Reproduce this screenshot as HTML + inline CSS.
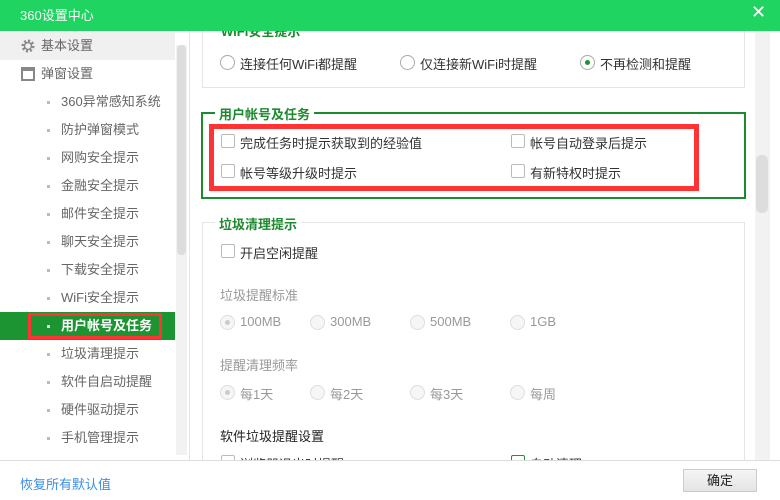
<!DOCTYPE html>
<html><head><meta charset="utf-8"><style>
*{margin:0;padding:0;box-sizing:border-box}
body{width:780px;height:500px;overflow:hidden;background:#fff;font-family:"Liberation Sans","Noto Sans CJK SC",sans-serif;font-size:13px;color:#333;position:relative}
.a{position:absolute;white-space:nowrap}
.title{left:0;top:0;width:780px;height:31px;background:#1fd460;color:#fff;z-index:5}
.side{left:0;top:31px;width:175px;height:429px;background:#fff}
.si{left:0;width:175px;height:28px;line-height:28px;color:#666}
.dot{position:absolute;left:47px;top:13px;width:3px;height:3px;background:#bbb}
.cb{position:absolute;width:14px;height:14px;border:1px solid #bbb;background:#fff;border-radius:2px}
.rd{position:absolute;width:15px;height:15px;border:1px solid #aaa;border-radius:50%;background:#fff}
.rdd{border-color:#ddd;background:#f6f6f6}
.g{color:#999}
</style></head><body>
<div class="a title"><span class="a" style="left:20px;top:5px;font-size:13px">360设置中心</span><span class="a" style="left:751px;top:2px;font-size:18px">✕</span></div>
<div class="a side">
 <div class="a si" style="top:1px;background:#f0f0f0;height:28px"><svg class="a" style="left:21px;top:7px" width="14" height="14" viewBox="0 0 14 14"><circle cx="7" cy="7" r="5" fill="none" stroke="#888" stroke-width="3" stroke-dasharray="2 1.9"/><circle cx="7" cy="7" r="3.5" fill="none" stroke="#888" stroke-width="1.5"/></svg><span class="a" style="left:41px;color:#666">基本设置</span></div>
 <div class="a si" style="top:29px"><svg class="a" style="left:21px;top:7px" width="14" height="14"><rect x="1" y="1" width="12" height="12" fill="none" stroke="#888" stroke-width="2"/><rect x="1" y="1" width="12" height="3" fill="#888"/></svg><span class="a" style="left:41px">弹窗设置</span></div>
</div>
<div class="a si" style="top:88px"><i class="dot"></i><span class="a" style="left:61px">360异常感知系统</span></div>
<div class="a si" style="top:116px"><i class="dot"></i><span class="a" style="left:61px">防护弹窗模式</span></div>
<div class="a si" style="top:144px"><i class="dot"></i><span class="a" style="left:61px">网购安全提示</span></div>
<div class="a si" style="top:172px"><i class="dot"></i><span class="a" style="left:61px">金融安全提示</span></div>
<div class="a si" style="top:200px"><i class="dot"></i><span class="a" style="left:61px">邮件安全提示</span></div>
<div class="a si" style="top:228px"><i class="dot"></i><span class="a" style="left:61px">聊天安全提示</span></div>
<div class="a si" style="top:256px"><i class="dot"></i><span class="a" style="left:61px">下载安全提示</span></div>
<div class="a si" style="top:284px"><i class="dot"></i><span class="a" style="left:61px">WiFi安全提示</span></div>
<div class="a si" style="top:312px;background:#1c9431;color:#fff;font-weight:bold"><div class="a" style="left:28px;top:1px;width:134px;height:26px;border:3px solid #f33"></div><i class="dot" style="background:#ddd"></i><span class="a" style="left:61px">用户帐号及任务</span></div>
<div class="a si" style="top:340px"><i class="dot"></i><span class="a" style="left:61px">垃圾清理提示</span></div>
<div class="a si" style="top:368px"><i class="dot"></i><span class="a" style="left:61px">软件自启动提醒</span></div>
<div class="a si" style="top:396px"><i class="dot"></i><span class="a" style="left:61px">硬件驱动提示</span></div>
<div class="a si" style="top:424px"><i class="dot"></i><span class="a" style="left:61px">手机管理提示</span></div>
<div class="a" style="left:176px;top:45px;width:11px;height:410px;background:#f2f2f2"></div>
<div class="a" style="left:177px;top:45px;width:9px;height:210px;background:#ddd;border-radius:4px"></div>
<div class="a" style="left:189px;top:31px;width:1px;height:429px;background:#e5e5e5"></div>
<div class="a" style="left:755px;top:31px;width:15px;height:429px;background:#f2f2f2"></div>
<div class="a" style="left:756px;top:155px;width:12px;height:58px;background:#ddd;border-radius:5px"></div>
<!-- wifi box -->
<div class="a" style="left:202px;top:20px;width:543px;height:68px;border:1px solid #e5e5e5"></div>
<span class="a" style="left:217px;top:21px;color:#1c8a2e;font-weight:bold;background:#fff;padding:0 4px">WiFi安全提示</span>
<i class="rd" style="left:220px;top:55px"></i><span class="a" style="left:240px;top:54px">连接任何WiFi都提醒</span>
<i class="rd" style="left:400px;top:55px"></i><span class="a" style="left:420px;top:54px">仅连接新WiFi时提醒</span>
<i class="rd" style="left:580px;top:55px"></i><i class="a" style="left:585px;top:60px;width:5px;height:5px;border-radius:50%;background:#1c9431"></i><span class="a" style="left:600px;top:54px">不再检测和提醒</span>
<!-- account box -->
<div class="a" style="left:201px;top:112px;width:545px;height:87px;border:2px solid #1c8a2e"></div>
<span class="a" style="left:215px;top:104px;color:#1c8a2e;font-weight:bold;background:#fff;padding:0 4px">用户帐号及任务</span>
<div class="a" style="left:209px;top:124px;width:490px;height:67px;border:5px solid #f33"></div>
<i class="cb" style="left:221px;top:134px"></i><span class="a" style="left:240px;top:133px">完成任务时提示获取到的经验值</span>
<i class="cb" style="left:511px;top:134px"></i><span class="a" style="left:530px;top:133px">帐号自动登录后提示</span>
<i class="cb" style="left:221px;top:164px"></i><span class="a" style="left:240px;top:163px">帐号等级升级时提示</span>
<i class="cb" style="left:511px;top:164px"></i><span class="a" style="left:530px;top:163px">有新特权时提示</span>
<!-- junk box -->
<div class="a" style="left:202px;top:222px;width:543px;height:260px;border:1px solid #e5e5e5"></div>
<span class="a" style="left:215px;top:214px;color:#1c8a2e;font-weight:bold;background:#fff;padding:0 4px">垃圾清理提示</span>
<i class="cb" style="left:221px;top:244px"></i><span class="a" style="left:240px;top:243px">开启空闲提醒</span>
<span class="a g" style="left:220px;top:285px">垃圾提醒标准</span>
<i class="rd rdd" style="left:220px;top:315px"></i><i class="a" style="left:225px;top:320px;width:5px;height:5px;border-radius:50%;background:#ccc"></i><span class="a g" style="left:240px;top:314px">100MB</span>
<i class="rd rdd" style="left:310px;top:315px"></i><span class="a g" style="left:330px;top:314px">300MB</span>
<i class="rd rdd" style="left:410px;top:315px"></i><span class="a g" style="left:430px;top:314px">500MB</span>
<i class="rd rdd" style="left:510px;top:315px"></i><span class="a g" style="left:530px;top:314px">1GB</span>
<span class="a g" style="left:220px;top:355px">提醒清理频率</span>
<i class="rd rdd" style="left:220px;top:385px"></i><i class="a" style="left:225px;top:390px;width:5px;height:5px;border-radius:50%;background:#ccc"></i><span class="a g" style="left:240px;top:384px">每1天</span>
<i class="rd rdd" style="left:310px;top:385px"></i><span class="a g" style="left:330px;top:384px">每2天</span>
<i class="rd rdd" style="left:410px;top:385px"></i><span class="a g" style="left:430px;top:384px">每3天</span>
<i class="rd rdd" style="left:510px;top:385px"></i><span class="a g" style="left:530px;top:384px">每周</span>
<span class="a" style="left:220px;top:426px;color:#222">软件垃圾提醒设置</span>
<i class="cb" style="left:221px;top:455px"></i><span class="a" style="left:240px;top:454px">浏览器退出时提醒</span>
<i class="cb" style="left:511px;top:455px;border-color:#1c9431"></i><span class="a" style="left:530px;top:454px">自动清理</span>
<!-- bottom -->
<div class="a" style="left:0;top:460px;width:780px;height:40px;background:#fff;border-top:1px solid #ddd"></div>
<span class="a" style="left:20px;top:474px;color:#3a8ee6">恢复所有默认值</span>
<div class="a" style="left:683px;top:469px;width:74px;height:23px;border:1px solid #ccc;background:linear-gradient(#f5f5f5,#e4e4e4);text-align:center;line-height:21px;color:#222">确定</div>
</body></html>
